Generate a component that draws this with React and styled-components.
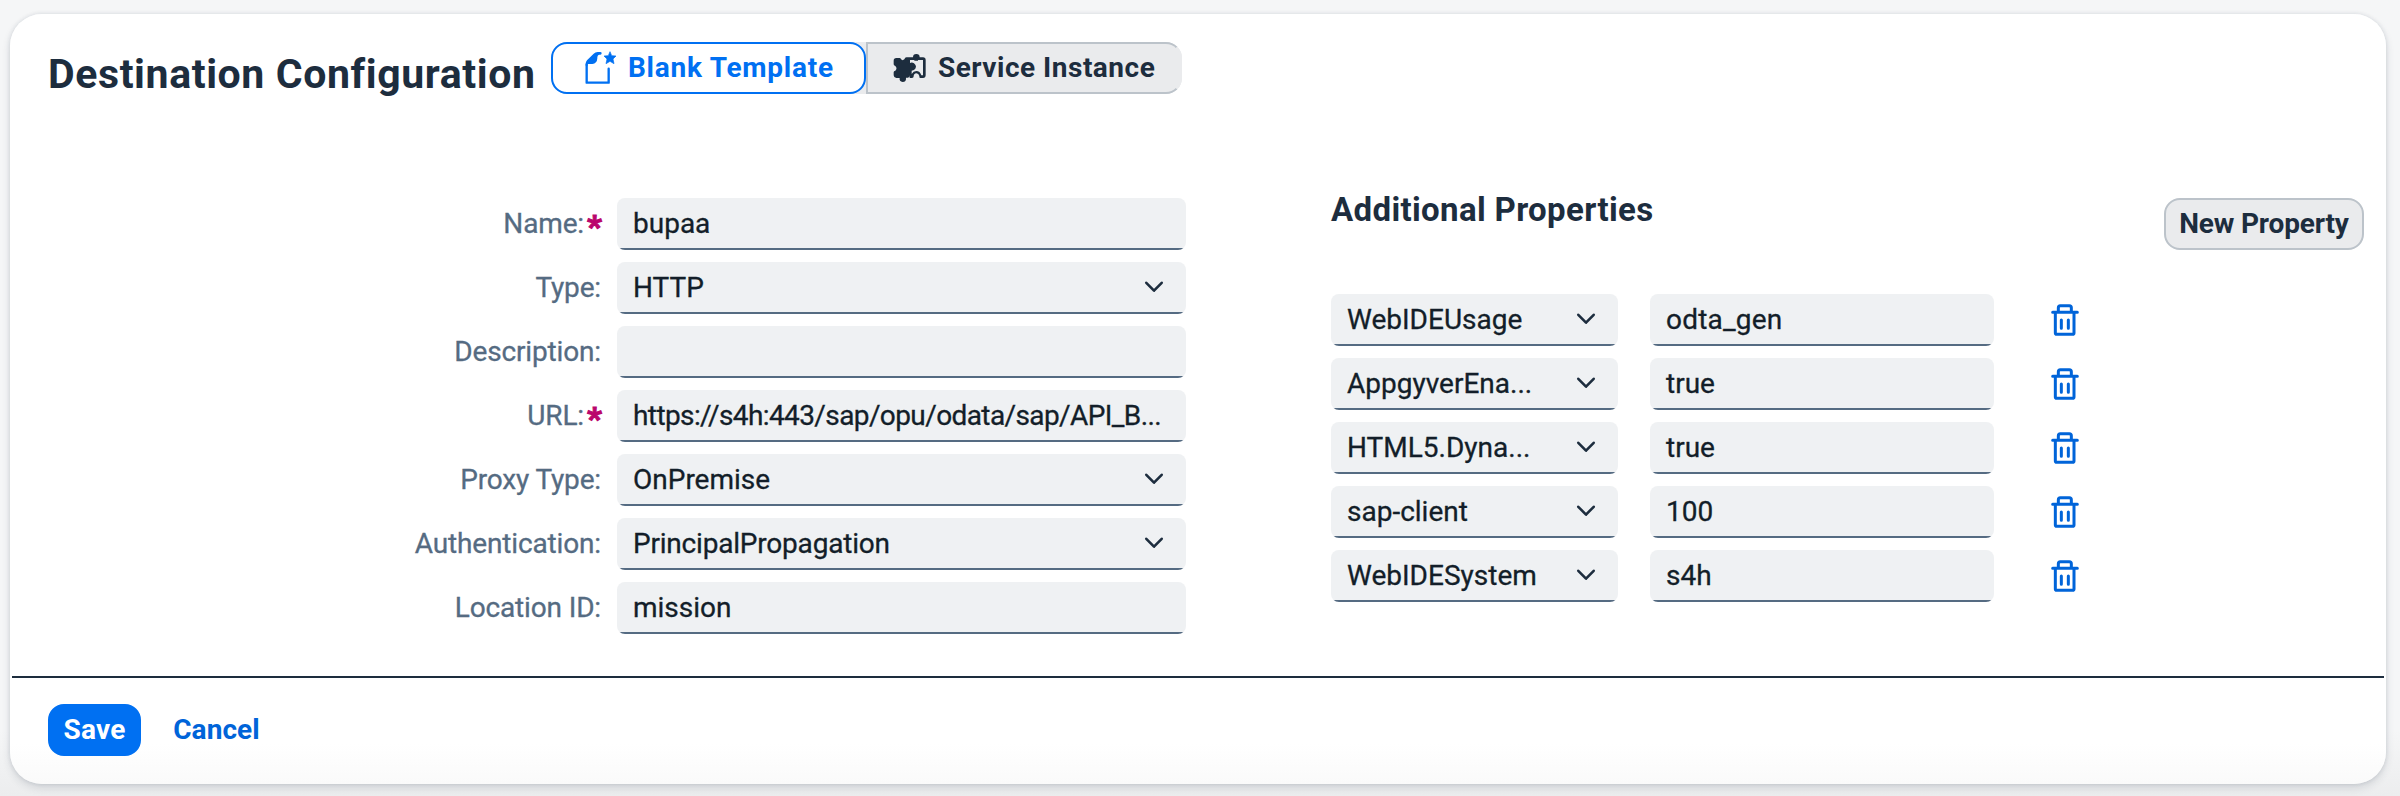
import React from "react";
import styled, { createGlobalStyle } from "styled-components";

const color = {
  ink: "#1d2d3e",
  value: "#131e29",
  label: "#556b82",
  accent: "#0070f2",
  link: "#0064d9",
  field: "#eff1f3",
  button: "#eaebed",
  buttonBorder: "#bcc3ca",
  required: "#ba066c",
};

const GlobalStyle = createGlobalStyle`
  *, *::before, *::after { box-sizing: border-box; }
  body {
    margin: 0;
    font-family: Roboto, "Liberation Sans", sans-serif;
    font-size: 28px;
    color: ${color.value};
  }
  button, input { font: inherit; }
  h1, h2 { margin: 0; }
`;

const Page = styled.div`
  height: 796px;
  padding: 14px 14px 12px 10px;
  background: linear-gradient(to bottom, #f5f6f7 0, #f5f6f7 730px, #ecedee 796px);
`;

const Card = styled.main`
  display: flex;
  flex-direction: column;
  height: 100%;
  border-radius: 32px;
  background: linear-gradient(to bottom, #fff 0, #fff 730px, #fafafa 770px);
  box-shadow: 0 0 4px rgba(34, 53, 72, 0.12), 0 4px 8px rgba(34, 53, 72, 0.14);
`;

const Header = styled.header`
  display: flex;
  flex: none;
  align-items: flex-start;
  height: 80px;
  padding: 28px 38px 0;
`;

const Title = styled.h1`
  width: 503px;
  padding-top: 5px;
  font-size: 41px;
  line-height: 55px;
  font-weight: 700;
  letter-spacing: 0.6px;
  white-space: nowrap;
  color: ${color.ink};
`;

const Segments = styled.div`
  display: flex;
  width: 631px;
  height: 52px;
  border-radius: 16px;
  background: ${color.button};
`;

const Segment = styled.button`
  display: flex;
  align-items: center;
  width: ${(p) => (p.$active ? 315 : 316)}px;
  padding: 0 0 1px ${(p) => (p.$active ? 32 : 25)}px;
  border: 2px solid ${(p) => (p.$active ? color.accent : color.buttonBorder)};
  ${(p) => !p.$active && `border-right-color: ${color.button};`}
  border-radius: ${(p) => (p.$active ? "16px" : "0 16px 16px 0")};
  background: ${(p) => (p.$active ? "#fff" : color.button)};
  color: ${(p) => (p.$active ? color.accent : color.ink)};
  font-weight: 700;
  letter-spacing: ${(p) => (p.$active ? 0.75 : 0.5)}px;
  white-space: nowrap;
  svg { flex: none; margin-right: ${(p) => (p.$active ? 11 : 12)}px; }
`;

const Body = styled.div`
  display: flex;
  flex: none;
  align-items: flex-start;
  height: 582px;
  padding: 104px 22px 0 0;
`;

const Form = styled.form`
  display: grid;
  grid-template-columns: 591px 569px;
  column-gap: 16px;
  row-gap: 12px;
`;

const Label = styled.label`
  display: flex;
  justify-content: flex-end;
  align-items: center;
  height: 52px;
  padding-bottom: 2px;
  color: ${color.label};
  -webkit-text-stroke: 0.3px currentColor;
  letter-spacing: -0.15px;
  white-space: nowrap;
`;

const Required = styled.span`
  width: 14px;
  margin-left: 3px;
  color: ${color.required};
  font-size: 32px;
  line-height: 30px;
  font-weight: 900;
  -webkit-text-stroke: 1px currentColor;
  transform: translateY(3px);
`;

const Field = styled.div`
  display: flex;
  align-items: center;
  width: ${(p) => p.$width}px;
  height: 52px;
  padding: 0 16px 2px;
  border-radius: 8px;
  background: linear-gradient(${color.label}, ${color.label}) bottom / 100% 2px no-repeat ${color.field};
  -webkit-text-stroke: 0.3px currentColor;
  letter-spacing: ${(p) => p.$spacing || 0}px;
`;

const Value = styled.span`
  flex: 1;
  white-space: nowrap;
`;

const Chevron = styled.svg`
  flex: none;
  width: 20px;
  height: 14px;
  margin-right: 6px;
`;

const Properties = styled.section`
  width: 1033px;
  margin-left: auto;
`;

const PropertiesHead = styled.div`
  display: flex;
  justify-content: space-between;
  align-items: flex-start;
  height: 96px;
`;

const Subtitle = styled.h2`
  font-size: 33px;
  line-height: 24px;
  font-weight: 700;
  letter-spacing: 0.35px;
  color: ${color.ink};
`;

const Button = styled.button`
  width: ${(p) => p.$width}px;
  height: 52px;
  padding: 0 0 1px;
  border: 2px solid ${(p) => p.$border || "transparent"};
  border-radius: 16px;
  background: ${(p) => p.$fill || "transparent"};
  color: ${(p) => p.$color};
  font-weight: 700;
  letter-spacing: ${(p) => p.$spacing || 0}px;
  white-space: nowrap;
`;

const PropertyRow = styled.div`
  display: flex;
  align-items: center;
  gap: 32px;
  margin-bottom: 12px;
`;

const DeleteButton = styled.button`
  display: flex;
  align-items: center;
  justify-content: center;
  width: 78px;
  height: 52px;
  padding: 0;
  border: 0;
  background: none;
  color: ${color.link};
`;

const Footer = styled.footer`
  display: flex;
  gap: 12px;
  margin: 0 2px;
  padding: 26px 36px 0;
  border-top: 2px solid ${color.ink};
`;

const ChevronIcon = () => (
  <Chevron viewBox="0 0 20 14" fill="none" stroke={color.ink} strokeWidth="2.6" strokeLinecap="round" strokeLinejoin="round">
    <path d="M2.3 2.8 L10 10.7 L17.7 2.8" />
  </Chevron>
);

const BlankIcon = () => (
  <svg width="32" height="34" viewBox="0 0 96 102">
    <path d="M5 40 V95 H71 V53" fill="none" stroke="currentColor" strokeWidth="7" strokeLinecap="round" strokeLinejoin="round" />
    <path d="M2 38 Q2 33 6 28 L26 8 Q31 3 38 3 H46 Q50 3 50 7 Q50 11 46 11 H42 Q38 12 37 18 V22 Q36 38 22 39 H8 V44 H2 Z" fill="currentColor" />
    <path d="M75 2 L80 14 L93 15 L84 24 L87 38 L75 31 L63 38 L66 24 L57 15 L70 14 Z" fill="currentColor" stroke="currentColor" strokeWidth="2" strokeLinejoin="round" />
  </svg>
);

const PuzzleIcon = () => (
  <svg width="33" height="28" viewBox="0 0 99 84">
    <path d="M10 12 H20 Q23 12 24 16 Q29 21 34 16 Q35 12 39 12 H46 Q51 12 51 17 V27 Q57 24 63 28 Q69 33 69 38 Q68 46 61 49 Q55 51 51 49 V64 Q51 70 45 71 H39 Q40 84 29 84 Q18 83 20 72 H10 Q2 71 2 64 V55 Q2 51 7 50 Q14 43 7 36 Q2 35 2 31 V20 Q2 12 10 12 Z" fill="currentColor" />
    <path d="M36 18 V14 Q36 10 41 10 H60 Q60 0 70 0 Q80 0 80 10 H90 Q98 10 98 18 V63 Q98 72 90 72 H82 Q78 72 79 66 Q77 58 70 58 Q62 59 62 67 Q62 72 57 72 H50 V48 H56 V60 Q61 51 70 51 Q81 51 85 64 H90 V18 H75 V20 H64 V18 Z" fill="currentColor" />
  </svg>
);

const TrashIcon = () => (
  <svg width="28" height="32" viewBox="0 0 84 96" fill="none" stroke="currentColor" strokeWidth="9" strokeLinecap="round" strokeLinejoin="round">
    <path d="M5 25 H79 M13 25 V87 Q13 91 17 91 H65 Q69 91 69 87 V25 M22 25 V11 Q22 5 28 5 H55 Q61 5 61 11 V25 M31 48 V73 M52 48 V73" />
  </svg>
);

const fields = [
  { label: "Name:", value: "bupaa", required: true },
  { label: "Type:", value: "HTTP", select: true },
  { label: "Description:", value: "" },
  { label: "URL:", value: "https://s4h:443/sap/opu/odata/sap/API_B...", required: true, spacing: -0.6 },
  { label: "Proxy Type:", value: "OnPremise", select: true },
  { label: "Authentication:", value: "PrincipalPropagation", select: true, spacing: -0.2 },
  { label: "Location ID:", value: "mission" },
];

const properties = [
  { key: "WebIDEUsage", value: "odta_gen", spacing: 0.2 },
  { key: "AppgyverEna...", value: "true" },
  { key: "HTML5.Dyna...", value: "true" },
  { key: "sap-client", value: "100" },
  { key: "WebIDESystem", value: "s4h" },
];

export default function App() {
  return (
    <>
      <GlobalStyle />
      <Page>
        <Card>
          <Header>
            <Title>Destination Configuration</Title>
            <Segments>
              <Segment $active>
                <BlankIcon />
                Blank Template
              </Segment>
              <Segment>
                <PuzzleIcon />
                Service Instance
              </Segment>
            </Segments>
          </Header>
          <Body>
            <Form>
              {fields.map((f) => (
                <React.Fragment key={f.label}>
                  <Label>
                    {f.label}
                    {f.required && <Required>*</Required>}
                  </Label>
                  <Field $width={569} $spacing={f.spacing}>
                    <Value>{f.value}</Value>
                    {f.select && <ChevronIcon />}
                  </Field>
                </React.Fragment>
              ))}
            </Form>
            <Properties>
              <PropertiesHead>
                <Subtitle>Additional Properties</Subtitle>
                <Button $width={200} $fill={color.button} $border={color.buttonBorder} $color={color.ink} $spacing={-0.15}>
                  New Property
                </Button>
              </PropertiesHead>
              {properties.map((p) => (
                <PropertyRow key={p.key}>
                  <Field $width={287}>
                    <Value>{p.key}</Value>
                    <ChevronIcon />
                  </Field>
                  <Field $width={344} $spacing={p.spacing}>
                    <Value>{p.value}</Value>
                  </Field>
                  <DeleteButton aria-label="Delete">
                    <TrashIcon />
                  </DeleteButton>
                </PropertyRow>
              ))}
            </Properties>
          </Body>
          <Footer>
            <Button $width={93} $fill={color.accent} $border={color.accent} $color="#fff" $spacing={0.2}>
              Save
            </Button>
            <Button $width={127} $color={color.link} $spacing={0.1}>
              Cancel
            </Button>
          </Footer>
        </Card>
      </Page>
    </>
  );
}
